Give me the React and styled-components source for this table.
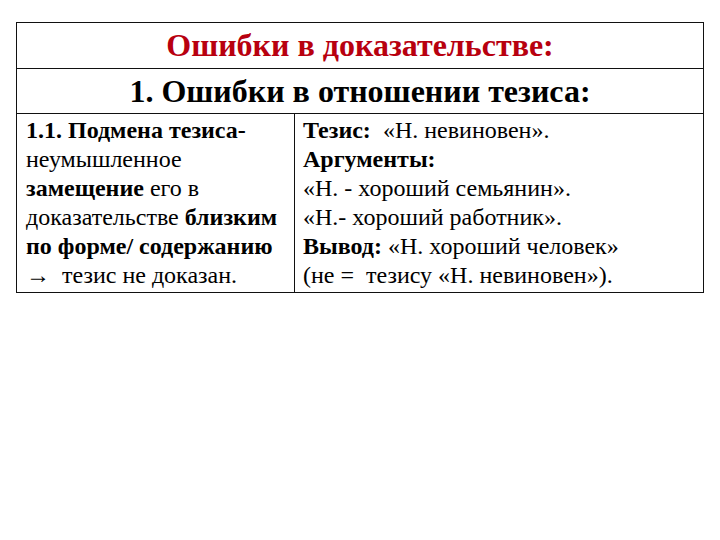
import styled, { createGlobalStyle } from "styled-components";

const serif = `"Liberation Serif", "Times New Roman", serif`;

const Global = createGlobalStyle`
    body{
        margin:0;
        background:#fff;
        font-family:${serif};
        color:#000;
    }
`

const Page = styled.div`
    width:720px;
    height:540px;
    padding:22px 16px 0 16px;
    box-sizing:border-box;
`

const Table = styled.div`
    display:grid;
    grid-template-columns:277px 1fr;
    border:1px solid #111;
`

const HeadRow = styled.div`
    grid-column:1 / 3;
    height:${p => p.h}px;
    display:flex;
    align-items:center;
    justify-content:center;
    font-family:${serif};
    font-weight:bold;
    font-size:32px;
    color:${p => p.color || "#000"};
    border-bottom:1px solid #111;
`

const Cell = styled.div`
    height:178px;
    box-sizing:border-box;
    padding:2px 0 0 ${p => p.divider ? 8 : 9}px;
    font-family:${serif};
    font-size:24px;
    line-height:29px;
    border-left:${p => p.divider ? "1px solid #111" : "none"};
    white-space:nowrap;
`

const Line = styled.div``

const B = styled.b`
    font-weight:bold;
`

const App = ()=>{
    return(
        <>
            <Global/>
            <Page>
                <Table>
                    <HeadRow h={45} color="#b8000f">Ошибки в доказательстве:</HeadRow>
                    <HeadRow h={44}>1. Ошибки в отношении тезиса:</HeadRow>

                    <Cell>
                        <Line><B>1.1. Подмена тезиса-</B></Line>
                        <Line>неумышленное</Line>
                        <Line><B>замещение</B> его в</Line>
                        <Line>доказательстве <B>близким</B></Line>
                        <Line><B>по форме/ содержанию</B></Line>
                        <Line>→&nbsp; тезис не доказан.</Line>
                    </Cell>

                    <Cell divider>
                        <Line><B>Тезис:</B>&nbsp; «Н. невиновен».</Line>
                        <Line><B>Аргументы:</B></Line>
                        <Line>«Н. - хороший семьянин».</Line>
                        <Line>«Н.- хороший работник».</Line>
                        <Line><B>Вывод:</B> «Н. хороший человек»</Line>
                        <Line>(не =&nbsp; тезису «Н. невиновен»).</Line>
                    </Cell>
                </Table>
            </Page>
        </>
    )
}

export default App;
